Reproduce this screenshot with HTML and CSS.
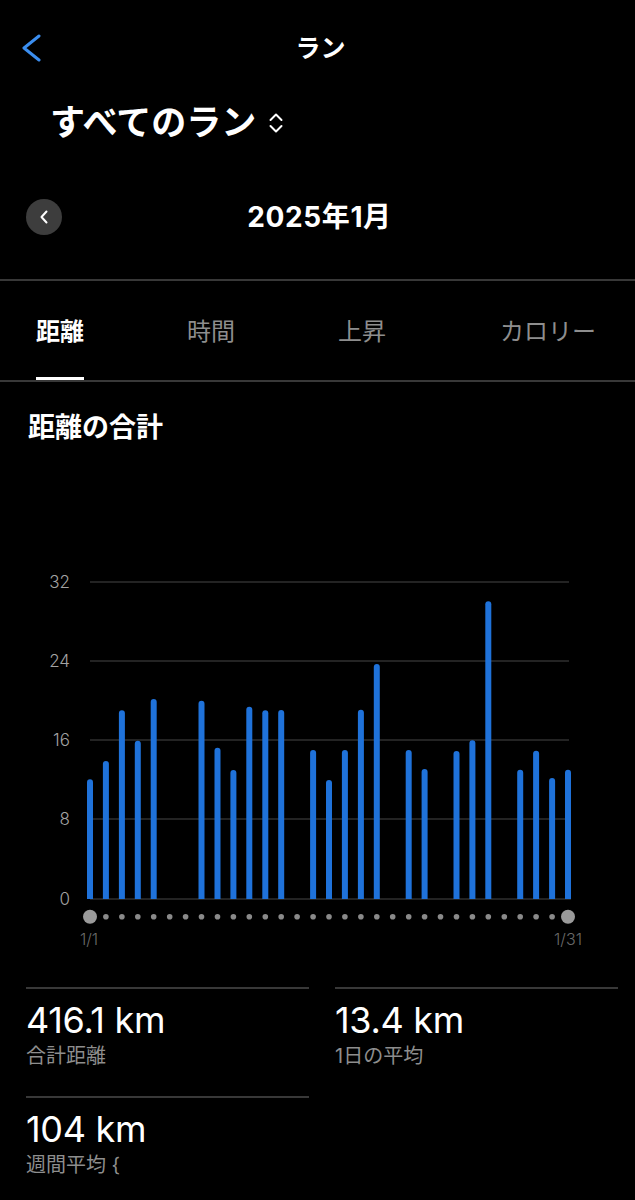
FILE: index.html
```html
<!DOCTYPE html>
<html lang="ja">
<head>
<meta charset="utf-8">
<title>ラン</title>
<link rel="stylesheet" href="styles.css">
</head>
<body>
<div class="screen">
  <header class="nav">
    <button class="back" aria-label="戻る">
      <svg width="24" height="28" viewBox="0 0 24 28"><polyline points="19,2 4,14 19,26" fill="none" stroke="#3b8ef0" stroke-width="3" stroke-linecap="round" stroke-linejoin="round"/></svg>
    </button>
    <h1 class="nav-title">ラン</h1>
    <span></span>
  </header>

  <div class="filter">
    <span class="filter-label">すべてのラン</span>
    <svg class="updown" width="14" height="22" viewBox="0 0 14 22"><polyline points="1.5,8 7,2.5 12.5,8" fill="none" stroke="#fff" stroke-width="2" stroke-linecap="round" stroke-linejoin="round"/><polyline points="1.5,14 7,19.5 12.5,14" fill="none" stroke="#fff" stroke-width="2" stroke-linecap="round" stroke-linejoin="round"/></svg>
  </div>

  <div class="month">
    <button class="month-prev" aria-label="前の月">
      <svg width="10" height="14" viewBox="0 0 10 14"><polyline points="7.5,1.5 2.5,7 7.5,12.5" fill="none" stroke="#fff" stroke-width="2" stroke-linecap="round" stroke-linejoin="round"/></svg>
    </button>
    <h2 class="month-title">2025年1月</h2>
    <span></span>
  </div>

  <nav class="tabs">
    <span class="tab active">距離</span>
    <span class="tab">時間</span>
    <span class="tab">上昇</span>
    <span class="tab">カロリー</span>
  </nav>

  <section class="chart-section">
    <h3 class="chart-title">距離の合計</h3>
    <svg class="chart" width="635" height="390" viewBox="0 0 635 390">
      <g class="grid">
        <line x1="90" y1="22" x2="569" y2="22"/>
        <line x1="90" y1="101" x2="569" y2="101"/>
        <line x1="90" y1="180" x2="569" y2="180"/>
        <line x1="90" y1="259" x2="569" y2="259"/>
        <line x1="90" y1="339" x2="571" y2="339"/>
      </g>
      <g class="ylabels">
        <text x="70" y="28">32</text>
        <text x="70" y="107">24</text>
        <text x="70" y="186">16</text>
        <text x="70" y="265">8</text>
        <text x="70" y="345">0</text>
      </g>
      <g class="bars">
        <path d="M87 339V222.3a3 3 0 0 1 6 0V339Z"/>
        <path d="M102.9 339V204a3 3 0 0 1 6 0V339Z"/>
        <path d="M118.9 339V153.3a3 3 0 0 1 6 0V339Z"/>
        <path d="M134.8 339V183.7a3 3 0 0 1 6 0V339Z"/>
        <path d="M150.7 339V142a3 3 0 0 1 6 0V339Z"/>
        <path d="M198.5 339V143.7a3 3 0 0 1 6 0V339Z"/>
        <path d="M214.5 339V190.7a3 3 0 0 1 6 0V339Z"/>
        <path d="M230.4 339V213a3 3 0 0 1 6 0V339Z"/>
        <path d="M246.3 339V149.7a3 3 0 0 1 6 0V339Z"/>
        <path d="M262.3 339V153.3a3 3 0 0 1 6 0V339Z"/>
        <path d="M278.2 339V153a3 3 0 0 1 6 0V339Z"/>
        <path d="M310.1 339V193a3 3 0 0 1 6 0V339Z"/>
        <path d="M326 339V223a3 3 0 0 1 6 0V339Z"/>
        <path d="M341.9 339V193a3 3 0 0 1 6 0V339Z"/>
        <path d="M357.9 339V152.7a3 3 0 0 1 6 0V339Z"/>
        <path d="M373.8 339V107a3 3 0 0 1 6 0V339Z"/>
        <path d="M405.7 339V193a3 3 0 0 1 6 0V339Z"/>
        <path d="M421.6 339V212a3 3 0 0 1 6 0V339Z"/>
        <path d="M453.5 339V194a3 3 0 0 1 6 0V339Z"/>
        <path d="M469.4 339V183.3a3 3 0 0 1 6 0V339Z"/>
        <path d="M485.3 339V44.3a3 3 0 0 1 6 0V339Z"/>
        <path d="M517.2 339V212.7a3 3 0 0 1 6 0V339Z"/>
        <path d="M533.1 339V193.7a3 3 0 0 1 6 0V339Z"/>
        <path d="M549.1 339V221a3 3 0 0 1 6 0V339Z"/>
        <path d="M565 339V212.7a3 3 0 0 1 6 0V339Z"/>
      </g>
      <g class="dots">
        <circle class="dot-end" cx="90" cy="356.7" r="7"/>
        <circle cx="105.9" cy="356.7" r="2.8"/>
        <circle cx="121.9" cy="356.7" r="2.8"/>
        <circle cx="137.8" cy="356.7" r="2.8"/>
        <circle cx="153.7" cy="356.7" r="2.8"/>
        <circle cx="169.7" cy="356.7" r="2.8"/>
        <circle cx="185.6" cy="356.7" r="2.8"/>
        <circle cx="201.5" cy="356.7" r="2.8"/>
        <circle cx="217.5" cy="356.7" r="2.8"/>
        <circle cx="233.4" cy="356.7" r="2.8"/>
        <circle cx="249.3" cy="356.7" r="2.8"/>
        <circle cx="265.3" cy="356.7" r="2.8"/>
        <circle cx="281.2" cy="356.7" r="2.8"/>
        <circle cx="297.1" cy="356.7" r="2.8"/>
        <circle cx="313.1" cy="356.7" r="2.8"/>
        <circle cx="329" cy="356.7" r="2.8"/>
        <circle cx="344.9" cy="356.7" r="2.8"/>
        <circle cx="360.9" cy="356.7" r="2.8"/>
        <circle cx="376.8" cy="356.7" r="2.8"/>
        <circle cx="392.7" cy="356.7" r="2.8"/>
        <circle cx="408.7" cy="356.7" r="2.8"/>
        <circle cx="424.6" cy="356.7" r="2.8"/>
        <circle cx="440.5" cy="356.7" r="2.8"/>
        <circle cx="456.5" cy="356.7" r="2.8"/>
        <circle cx="472.4" cy="356.7" r="2.8"/>
        <circle cx="488.3" cy="356.7" r="2.8"/>
        <circle cx="504.3" cy="356.7" r="2.8"/>
        <circle cx="520.2" cy="356.7" r="2.8"/>
        <circle cx="536.1" cy="356.7" r="2.8"/>
        <circle cx="552.1" cy="356.7" r="2.8"/>
        <circle class="dot-end" cx="568" cy="356.7" r="7"/>
      </g>
      <g class="xlabels">
        <text x="89" y="385">1/1</text>
        <text x="568" y="385">1/31</text>
      </g>
    </svg>
  </section>

  <section class="stats">
    <div class="stat">
      <div class="stat-value">416.1 km</div>
      <div class="stat-label">合計距離</div>
    </div>
    <div class="stat">
      <div class="stat-value">13.4 km</div>
      <div class="stat-label">1日の平均</div>
    </div>
    <div class="stat">
      <div class="stat-value">104 km</div>
      <div class="stat-label">週間平均 {</div>
    </div>
  </section>
</div>
</body>
</html>
```

FILE: styles.css
```css
html, body {
  margin: 0;
  padding: 0;
  background: #000;
}

body {
  color: #fff;
  font-family: "Inter", "Noto Sans CJK JP", sans-serif;
}

.screen {
  width: 635px;
  min-height: 1200px;
  background: #000;
}

button {
  background: none;
  border: 0;
  padding: 0;
  margin: 0;
  color: inherit;
  font: inherit;
}

/* top navigation */
.nav {
  display: grid;
  grid-template-columns: 1fr auto 1fr;
  align-items: center;
  height: 96px;
}

.back {
  justify-self: start;
  margin-left: 20px;
  display: flex;
}

.nav-title {
  margin: 0;
  font-size: 25px;
  font-weight: 700;
  line-height: 30px;
  padding-left: 6px;
}

/* filter */
.filter {
  display: flex;
  align-items: center;
  gap: 13px;
  height: 52px;
  padding-left: 50px;
}

.filter-label {
  font-size: 35px;
  font-weight: 700;
  line-height: 52px;
}

.updown {
  display: block;
  margin-top: 2px;
}

/* month selector */
.month {
  display: grid;
  grid-template-columns: 1fr auto 1fr;
  align-items: center;
  padding: 51px 0 44px;
  border-bottom: 2px solid #383838;
}

.month-prev {
  justify-self: start;
  margin-left: 26px;
  width: 36px;
  height: 36px;
  border-radius: 50%;
  background: #3d3d3d;
  display: flex;
  align-items: center;
  justify-content: center;
}

.month-prev svg {
  display: block;
  margin-left: -1px;
}

.month-title {
  margin: 0;
  font-size: 28px;
  font-weight: 700;
  line-height: 36px;
  letter-spacing: 0.6px;
  padding-left: 4px;
}

/* tabs */
.tabs {
  display: flex;
  padding: 0 0 0 36px;
  border-bottom: 2px solid #383838;
}

.tab {
  box-sizing: border-box;
  height: 99px;
  padding-top: 5px;
  border-bottom: 3px solid transparent;
  display: flex;
  align-items: center;
  font-size: 24px;
  line-height: 1;
  color: #8e8e8e;
  margin-right: 103px;
}

.tab:nth-child(3) {
  margin-right: 114px;
}

.tab:last-child {
  margin-right: 0;
}

.tab.active {
  color: #fff;
  font-weight: 700;
  border-bottom-color: #fff;
}

/* chart */
.chart-title {
  margin: 31px 0 0 28px;
  font-size: 27px;
  font-weight: 700;
  line-height: 30px;
}

.chart {
  display: block;
  margin-top: 117px;
}

.grid line {
  stroke: #464646;
  stroke-width: 1.2;
}

.ylabels text {
  fill: #a3a3a3;
  font-family: "Inter", sans-serif;
  font-size: 17px;
  font-weight: 300;
  text-anchor: end;
}

.bars path {
  fill: #1f72da;
}

.dots circle {
  fill: #8a8a8a;
}

.dots .dot-end {
  fill: #9a9a9a;
}

.xlabels text {
  fill: #6a6a6a;
  font-family: "Inter", sans-serif;
  font-size: 16px;
  font-weight: 300;
  text-anchor: middle;
}

/* stats */
.stats {
  display: grid;
  grid-template-columns: 1fr 1fr;
  column-gap: 26px;
  row-gap: 27px;
  padding: 0 17px 0 26px;
  margin-top: 37px;
}

.stat {
  border-top: 2px solid #383838;
  padding-top: 11px;
}

.stat-value {
  font-size: 36px;
  line-height: 40px;
  font-weight: 400;
  letter-spacing: -0.3px;
}

.stat-label {
  margin-top: 3px;
  font-size: 20px;
  line-height: 26px;
  color: #8e8e8e;
}
```
